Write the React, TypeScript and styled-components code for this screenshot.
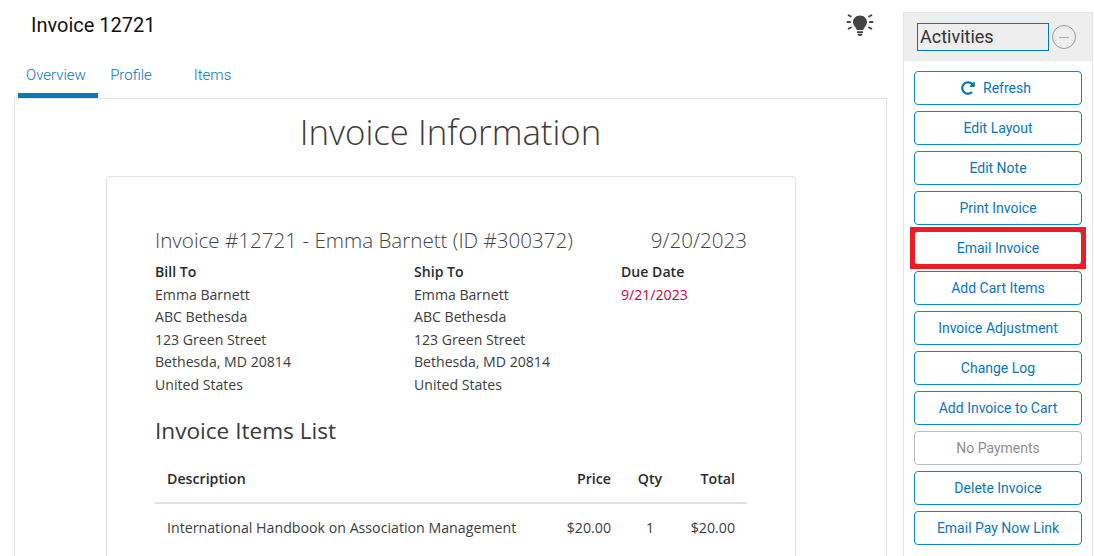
import React from 'react'
import styled, { createGlobalStyle } from 'styled-components'
import { FaRedoAlt } from 'react-icons/fa'

const GlobalStyle = createGlobalStyle`
	html, body {
		margin: 0;
		height: 556px;
		overflow: hidden;
		background: #fff;
	}
	* {
		box-sizing: border-box;
	}
`

const Page = styled.div`
	display: flex;
	align-items: flex-start;
	width: 1094px;
	height: 556px;
	overflow: hidden;
	font-family: Roboto, sans-serif;
`

const Main = styled.main`
	width: 873px;
	margin-left: 14px;
	flex: none;
`

const TitleRow = styled.div`
	display: flex;
	justify-content: space-between;
	height: 55px;
	padding: 12px 13px 0 17px;
`

const PageTitle = styled.h1`
	margin: 0;
	font-size: 20px;
	line-height: 26px;
	font-weight: 400;
	color: #111;
`

const Hint = styled.svg`
	width: 28px;
	height: 26px;
	color: #444;
`

const Tabs = styled.nav`
	display: flex;
	height: 43px;
	padding-left: 4px;
`

const Tab = styled.a<{ $active?: boolean; $width: number; $shift?: number }>`
	width: ${p => p.$width}px;
	padding-right: ${p => p.$shift || 0}px;
	text-align: center;
	font-size: 15px;
	line-height: 40px;
	font-weight: 300;
	color: #0a76ba;
	border-bottom: 5px solid ${p => (p.$active ? '#0478bd' : 'transparent')};
`

const Panel = styled.section`
	height: 500px;
	border: 1px solid #e4e4e4;
	border-bottom: 0;
	font-family: 'Open Sans', sans-serif;
	color: #333;
`

const PanelTitle = styled.h2`
	margin: 9px 0 21px;
	text-align: center;
	font-size: 34.8px;
	line-height: 47px;
	font-weight: 300;
	color: #3b3b3b;
`

const Card = styled.div`
	width: 690px;
	height: 420px;
	margin-left: 91px;
	padding: 45px 48px 0;
	border: 1px solid #e2e2e2;
	border-radius: 4px;
`

const InvoiceHead = styled.div`
	display: flex;
	justify-content: space-between;
	font-size: 20.6px;
	line-height: 36px;
	font-weight: 300;
	color: #444;
`

const Columns = styled.div`
	display: grid;
	grid-template-columns: 259px 207px 1fr;
	margin-top: 3px;
	font-size: 14.1px;
	line-height: 22.5px;
	color: #3d3d3d;
`

const Strong = styled.div`
	font-weight: 600;
	color: #2b2b2b;
`

const Due = styled.div`
	color: #d6003c;
`

const SubTitle = styled.h3`
	margin: 20px 0 14px;
	font-size: 22.6px;
	line-height: 30px;
	font-weight: 400;
	color: #3b3b3b;
`

const Table = styled.table`
	width: 592px;
	border-collapse: collapse;
	font-size: 14.2px;
	color: #3d3d3d;
`

const Th = styled.th<{ $w?: number; $align?: string }>`
	width: ${p => (p.$w ? `${p.$w}px` : 'auto')};
	height: 43px;
	padding: 0 12px 6px;
	text-align: ${p => p.$align || 'left'};
	font-weight: 600;
	color: #2b2b2b;
	border-bottom: 2px solid #dee2e6;
`

const Td = styled.td<{ $align?: string }>`
	height: 48px;
	padding: 0 12px;
	white-space: nowrap;
	text-align: ${p => p.$align || 'left'};
`

const Sidebar = styled.aside`
	position: relative;
	width: 190px;
	height: 544px;
	margin: 12px 0 0 16px;
	flex: none;
	border: 1px solid #e4e4e4;
	border-bottom: 0;
`

const SideHead = styled.div`
	display: flex;
	align-items: center;
	gap: 3px;
	height: 48px;
	padding-left: 13px;
	background: #eeeeee;
`

const HeadInput = styled.div`
	width: 132px;
	height: 28px;
	padding-left: 2px;
	border: 1px solid #0478bd;
	font-size: 18px;
	line-height: 26px;
	color: #333;
`

const Collapse = styled.div`
	width: 24px;
	height: 24px;
	border: 1px solid #999;
	border-radius: 50%;
	display: flex;
	align-items: center;
	justify-content: center;

	&::before {
		content: '';
		width: 10px;
		height: 1px;
		background: #aaa;
	}
`

const ButtonList = styled.div`
	display: flex;
	flex-direction: column;
	gap: 6px;
	padding: 10px 10px 0;
`

const ActionButton = styled.button<{ $disabled?: boolean; $withIcon?: boolean }>`
	display: flex;
	align-items: center;
	justify-content: center;
	gap: 8px;
	width: 168px;
	height: 34px;
	padding: 0 ${p => (p.$withIcon ? 4 : 0)}px 0 0;
	background: #fff;
	border: 1px solid ${p => (p.$disabled ? '#bdbdbd' : '#0a87cf')};
	border-radius: 4px;
	font-family: Roboto, sans-serif;
	font-size: 14px;
	color: ${p => (p.$disabled ? '#8e8e8e' : '#0a76ba')};
`

const Highlight = styled.div`
	position: absolute;
	left: 6px;
	top: 214px;
	width: 176px;
	height: 42px;
	border: 5px solid #ed1c24;
	pointer-events: none;
`

const actions = [
	'Edit Layout',
	'Edit Note',
	'Print Invoice',
	'Email Invoice',
	'Add Cart Items',
	'Invoice Adjustment',
	'Change Log',
	'Add Invoice to Cart'
]

function Lightbulb() {
	return (
		<Hint viewBox="0 0 28 26">
			<path
				fill="currentColor"
				d="M14 3.5c-4 0-7 2.9-7 6.6 0 2.7 1.6 4.2 2.7 5.7.6.8.9 1.5 1 2.2h6.6c.1-.7.4-1.4 1-2.2 1.1-1.5 2.7-3 2.7-5.7 0-3.7-3-6.6-7-6.6zM10.9 19.2h6.2v1.7h-6.2zM11.4 21.8h5.2l-1.2 2.2h-2.8z"
			/>
			<path
				stroke="currentColor"
				strokeWidth="1.8"
				strokeLinecap="round"
				d="M1.5 10h2.6M23.9 10h2.6M2.6 3.2l2.3 1.4M25.4 3.2l-2.3 1.4M2.6 16.8l2.3-1.4M25.4 16.8l-2.3-1.4"
			/>
		</Hint>
	)
}

export default function App() {
	return (
		<Page>
			<GlobalStyle />
			<Main>
				<TitleRow>
					<PageTitle>Invoice 12721</PageTitle>
					<Lightbulb />
				</TitleRow>
				<Tabs>
					<Tab $active $width={80} $shift={4}>
						Overview
					</Tab>
					<Tab $width={66}>Profile</Tab>
					<Tab $width={97}>Items</Tab>
				</Tabs>
				<Panel>
					<PanelTitle>Invoice Information</PanelTitle>
					<Card>
						<InvoiceHead>
							<span>Invoice #12721 - Emma Barnett (ID #300372)</span>
							<span>9/20/2023</span>
						</InvoiceHead>
						<Columns>
							<div>
								<Strong>Bill To</Strong>
								<div>Emma Barnett</div>
								<div>ABC Bethesda</div>
								<div>123 Green Street</div>
								<div>Bethesda, MD 20814</div>
								<div>United States</div>
							</div>
							<div>
								<Strong>Ship To</Strong>
								<div>Emma Barnett</div>
								<div>ABC Bethesda</div>
								<div>123 Green Street</div>
								<div>Bethesda, MD 20814</div>
								<div>United States</div>
							</div>
							<div>
								<Strong>Due Date</Strong>
								<Due>9/21/2023</Due>
							</div>
						</Columns>
						<SubTitle>Invoice Items List</SubTitle>
						<Table>
							<thead>
								<tr>
									<Th>Description</Th>
									<Th $w={80} $align="right">
										Price
									</Th>
									<Th $w={54} $align="center">
										Qty
									</Th>
									<Th $w={70} $align="right">
										Total
									</Th>
								</tr>
							</thead>
							<tbody>
								<tr>
									<Td>International Handbook on Association Management</Td>
									<Td $align="right">$20.00</Td>
									<Td $align="center">1</Td>
									<Td $align="right">$20.00</Td>
								</tr>
							</tbody>
						</Table>
					</Card>
				</Panel>
			</Main>
			<Sidebar>
				<SideHead>
					<HeadInput>Activities</HeadInput>
					<Collapse />
				</SideHead>
				<ButtonList>
					<ActionButton $withIcon>
						<FaRedoAlt size={14} />
						Refresh
					</ActionButton>
					{actions.map(label => (
						<ActionButton key={label}>{label}</ActionButton>
					))}
					<ActionButton $disabled>No Payments</ActionButton>
					<ActionButton>Delete Invoice</ActionButton>
					<ActionButton>Email Pay Now Link</ActionButton>
				</ButtonList>
				<Highlight />
			</Sidebar>
		</Page>
	)
}
